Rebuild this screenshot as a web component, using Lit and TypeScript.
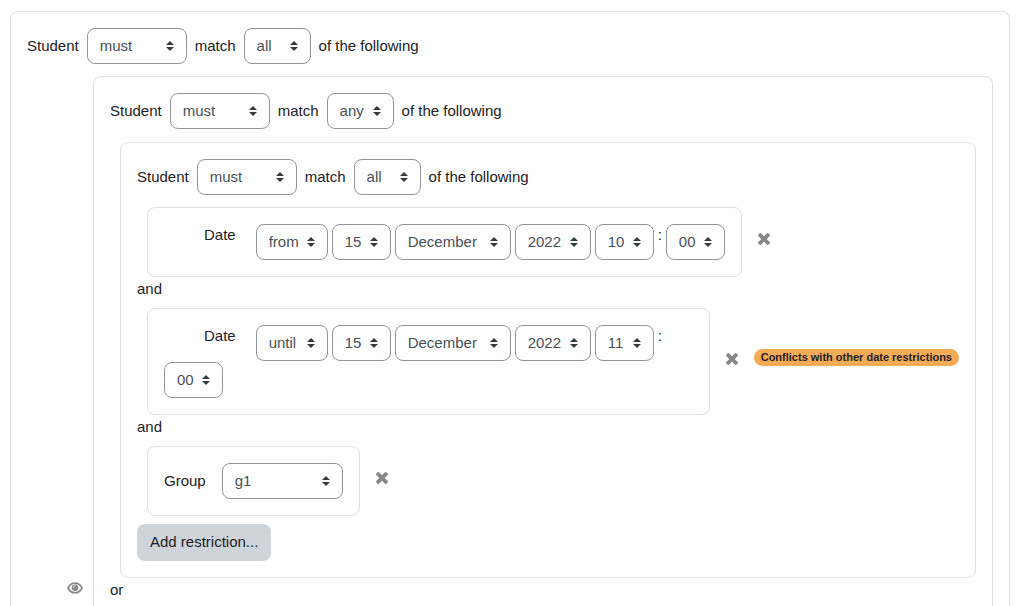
import { LitElement, html, css, svg } from "lit";
import { customElement, property } from "lit/decorators.js";

const controls = css`
  * {
    box-sizing: border-box;
  }
  .select {
    appearance: none;
    height: 36px;
    margin: 0;
    padding: 6px 28px 6px 12px;
    border: 1px solid #8f959e;
    border-radius: 8px;
    color: #495057;
    font: inherit;
    background: #fff
      url("data:image/svg+xml,%3csvg xmlns='http://www.w3.org/2000/svg' width='4' height='5' viewBox='0 0 4 5'%3e%3cpath fill='%23343a40' d='M2 0L0 2h4zm0 5L0 3h4z'/%3e%3c/svg%3e")
      no-repeat right 12px center / 8px 10px;
  }
  .icon-button {
    display: block;
    flex: none;
    margin: 0;
    padding: 0;
    border: 0;
    background: none;
    color: #888;
    cursor: pointer;
  }
  .icon-button svg {
    display: block;
    fill: currentColor;
  }
`;

const eyeIcon = svg`<svg width="16" height="12" viewBox="0 0 16 12" aria-hidden="true"><path d="M.9 6C2.5 3 5.1 1.2 8 1.2S13.5 3 15.1 6C13.5 9 10.9 10.8 8 10.8S2.5 9 .9 6z" fill="none" stroke="currentColor" stroke-width="1.7" stroke-linejoin="round"/><circle cx="8" cy="5.7" r="3.2"/><path d="M6.300 5.500A1.800 1.800 0 0 1 8 3.800" fill="none" stroke="#fff" stroke-width=".7" stroke-linecap="round"/></svg>`;

const timesIcon = svg`<svg width="12" height="12" viewBox="302 366 1188 1188" aria-hidden="true"><path d="M1490 1322q0 40-28 68l-136 136q-28 28-68 28t-68-28l-294-294-294 294q-28 28-68 28t-68-28l-136-136q-28-28-28-68t28-68l294-294-294-294q-28-28-28-68t28-68l136-136q28-28 68-28t68 28l294 294 294-294q28-28 68-28t68 28l136 136q28 28 28 68t-28 68l-294 294 294 294q28 28 28 68z"/></svg>`;

const MONTHS = [
  "January", "February", "March", "April", "May", "June", "July",
  "August", "September", "October", "November", "December",
];
const pad = (n: number) => String(n).padStart(2, "0");
const range = (from: number, to: number, format: (n: number) => string) =>
  Array.from({ length: to - from + 1 }, (_, i) => format(from + i));

const DAYS = range(1, 31, String);
const YEARS = range(2015, 2030, String);
const HOURS = range(0, 23, pad);
const MINUTES = range(0, 11, (n) => pad(n * 5));

const select = (label: string, options: string[], value: string, id = "") => html`
  <select class="select" id=${id || label.toLowerCase()} aria-label=${label}>
    ${options.map((o) => html`<option ?selected=${o === value}>${o}</option>`)}
  </select>
`;

/** Sentence at the top of a restriction set: "Student must match all of the following". */
@customElement("match-header")
export class MatchHeader extends LitElement {
  @property() operator = "all";

  static styles = [
    controls,
    css`
      :host {
        display: block;
        margin-bottom: 12px;
      }
      .row {
        display: flex;
        flex-wrap: wrap;
        align-items: center;
        gap: 8px;
      }
    `,
  ];

  render() {
    return html`
      <div class="row">
        <label for="sign">Student</label>
        ${select("Restriction type", ["must", "must not"], "must", "sign")}
        <label for="operator">match</label>
        ${select("Required restrictions", ["all", "any"], this.operator, "operator")}
        <span>of the following</span>
      </div>
    `;
  }
}

/** One restriction: a bordered card, its delete button and an optional warning. */
@customElement("restriction-item")
export class RestrictionItem extends LitElement {
  @property() warning = "";

  static styles = [
    controls,
    css`
      :host {
        display: flex;
        align-items: center;
        gap: 16px;
        margin-left: 10px;
      }
      .card {
        flex: 0 1 auto;
        min-width: 0;
        padding: 16px;
        border: 1px solid #dfdfdf;
        border-radius: 8px;
      }
      .remove {
        padding-bottom: 6px;
      }
      .status {
        flex: none;
        padding-bottom: 8px;
        line-height: 17px;
      }
      .badge {
        display: block;
        padding: 0 7px;
        border-radius: 9px;
        background: #f5aa55;
        color: #1d2125;
        font-size: 11px;
        font-weight: bold;
        white-space: nowrap;
      }
    `,
  ];

  render() {
    return html`
      <div class="card"><slot></slot></div>
      <button class="icon-button remove" type="button" aria-label="Delete">${timesIcon}</button>
      ${this.warning
        ? html`<div class="status"><span class="badge">${this.warning}</span></div>`
        : null}
    `;
  }
}

@customElement("date-fields")
export class DateFields extends LitElement {
  @property() direction = "from";
  @property() hour = "10";

  static styles = [
    controls,
    css`
      .fields {
        display: flex;
        flex-wrap: wrap;
        align-items: flex-start;
        gap: 1px 4px;
      }
      .label {
        padding: 0 16px 0 40px;
      }
    `,
  ];

  render() {
    return html`
      <div class="fields">
        <label class="label" for="direction">Date</label>
        ${select("Direction", ["from", "until"], this.direction)}
        ${select("Day", DAYS, "15")}
        ${select("Month", MONTHS, "December")}
        ${select("Year", YEARS, "2022")}
        ${select("Hour", HOURS, this.hour)}
        <span>:</span>
        ${select("Minute", MINUTES, "00")}
      </div>
    `;
  }
}

@customElement("group-fields")
export class GroupFields extends LitElement {
  static styles = [
    controls,
    css`
      .fields {
        display: flex;
        align-items: center;
        gap: 16px;
      }
    `,
  ];

  render() {
    return html`
      <div class="fields">
        <label for="group">Group</label>
        ${select("Group", ["(Any group)", "g1"], "g1")}
      </div>
    `;
  }
}

@customElement("app-root")
export class AppRoot extends LitElement {
  static styles = [
    controls,
    css`
      :host {
        display: flex;
        flex-direction: column;
        box-sizing: border-box;
        height: 100vh;
        padding: 11px 10px 0;
        overflow: hidden;
        background: #fff;
        color: #1d2125;
        font: 15px/22px "Liberation Sans", Arial, sans-serif;
      }
      .set {
        padding: 16px;
        border: 1px solid #dfdfdf;
        border-radius: 8px;
      }
      .open {
        padding-bottom: 0;
        border-bottom: 0;
        border-radius: 8px 8px 0 0;
      }
      .outer {
        display: flex;
        flex: 1;
        flex-direction: column;
      }
      .branch {
        display: flex;
        flex: 1;
        gap: 10px;
        padding-left: 40px;
      }
      .branch-set {
        flex: 1;
        min-width: 0;
      }
      .visibility {
        align-self: flex-end;
        padding-bottom: 12px;
      }
      .nested {
        margin: 13px 0 0 10px;
      }
      .joiner {
        padding-bottom: 8px;
        line-height: 23px;
      }
      .joiner:last-child {
        padding-bottom: 0;
      }
      .add {
        display: block;
        height: 37px;
        margin: 8px 0 0;
        padding: 0 13px 1px;
        border: 0;
        border-radius: 8px;
        background: #ced4da;
        color: inherit;
        font: inherit;
      }
    `,
  ];

  render() {
    return html`
      <section class="set open outer">
        <match-header operator="all"></match-header>
        <div class="branch">
          <button class="icon-button visibility" type="button" aria-label="Toggle visibility">
            ${eyeIcon}
          </button>
          <section class="set open branch-set">
            <match-header operator="any"></match-header>
            <section class="set nested">
              <match-header operator="all"></match-header>
              <restriction-item>
                <date-fields direction="from" hour="10"></date-fields>
              </restriction-item>
              <div class="joiner">and</div>
              <restriction-item warning="Conflicts with other date restrictions">
                <date-fields direction="until" hour="11"></date-fields>
              </restriction-item>
              <div class="joiner">and</div>
              <restriction-item>
                <group-fields></group-fields>
              </restriction-item>
              <button class="add" type="button">Add restriction...</button>
            </section>
            <div class="joiner">or</div>
          </section>
        </div>
      </section>
    `;
  }
}
